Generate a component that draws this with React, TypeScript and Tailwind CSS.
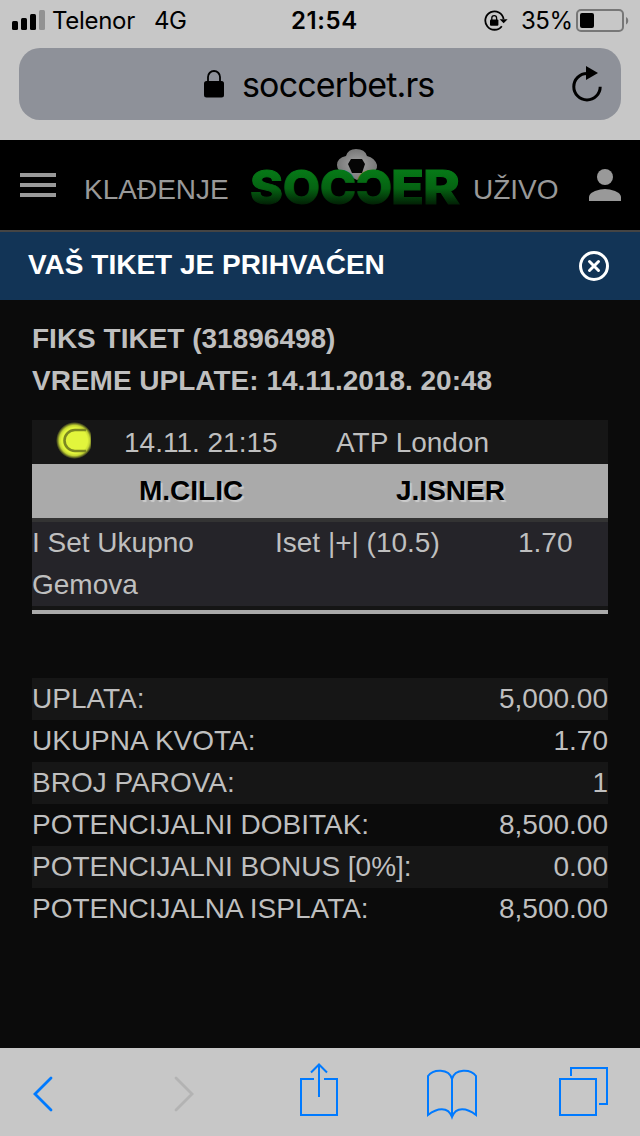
const totals = [
  { label: 'UPLATA:', value: '5,000.00' },
  { label: 'UKUPNA KVOTA:', value: '1.70' },
  { label: 'BROJ PAROVA:', value: '1' },
  { label: 'POTENCIJALNI DOBITAK:', value: '8,500.00' },
  { label: 'POTENCIJALNI BONUS [0%]:', value: '0.00' },
  { label: 'POTENCIJALNA ISPLATA:', value: '8,500.00' },
];

function StatusBar() {
  return (
    <div className="flex h-10 items-center pl-3 pt-px text-2xl leading-10 text-black">
      <div className="flex w-[279px] items-center">
        <svg className="-mt-px" width="34" height="20" viewBox="0 0 34 20">
          <rect x="0" y="11" width="6" height="9" rx="1.5" />
          <rect x="9" y="8" width="6" height="12" rx="1.5" />
          <rect x="18" y="4" width="6" height="16" rx="1.5" />
          <rect x="27" y="0" width="6" height="20" rx="1.5" fill="#929292" />
        </svg>
        <span className="ml-[6px] w-[102px] tracking-[-0.3px]">Telenor</span>
        <span className="tracking-[-0.5px]">4G</span>
      </div>
      <span className="w-[193px] font-semibold tracking-[0.6px]">21:54</span>
      <svg width="24" height="22" viewBox="0 0 24 22">
        <path d="M17.8 16.2A9.200 9.200 0 1 1 19.600 9" fill="none" stroke="#000" strokeWidth="1.8" />
        <path d="M15.600 9.200h8L19.600 13.200z" />
        <rect x="6" y="9.600" width="8.400" height="6.200" rx="1" />
        <path d="M7.800 10V8a2.400 2.400 0 0 1 4.800 0v2" fill="none" stroke="#000" strokeWidth="1.300" />
      </svg>
      <span className="ml-[13px] w-[55px] tracking-[-0.5px]">35%</span>
      <svg className="shrink-0" width="54" height="24" viewBox="0 0 54 24">
        <rect x="1" y="1" width="46" height="21" rx="4" fill="none" stroke="#777" strokeWidth="2" />
        <rect x="4" y="4" width="14" height="15" rx="2" />
        <path d="M50 8c3 1.500 3 6 0 7.500z" fill="#777" />
      </svg>
    </div>
  );
}

function AddressBar() {
  return (
    <div className="mx-[19px] mt-2 flex h-[72px] items-center rounded-[21px] bg-[#8e9199] text-black">
      <svg className="ml-[185px]" width="20" height="28" viewBox="0 0 20 28">
        <rect x="0" y="11" width="20" height="16.500" rx="2.500" />
        <path d="M4 12V7a6 6 0 0 1 12 0v5" fill="none" stroke="#000" strokeWidth="1.800" />
      </svg>
      <span className="ml-[18px] w-[328px] text-[34px] tracking-[-0.85px]">soccerbet.rs</span>
      <svg width="32" height="40" viewBox="0 0 32 40">
        <path d="M17 9.500A13.200 13.200 0 1 0 30.200 22.700" fill="none" stroke="#000" strokeWidth="3" />
        <path d="M16 2L28 9L16 16z" />
      </svg>
    </div>
  );
}

function Logo() {
  return (
    <svg
      width="214"
      height="74"
      viewBox="0 0 214 74"
      fontFamily="Inter, sans-serif"
      fontWeight="800"
      fontSize="47"
      fill="url(#grass)"
      stroke="url(#grass)"
      strokeWidth="1"
    >
      <defs>
        <linearGradient id="grass" gradientUnits="userSpaceOnUse" x1="0" y1="22" x2="0" y2="59">
          <stop offset="0" stopColor="#067a17" />
          <stop offset="0.500" stopColor="#056312" />
          <stop offset="1" stopColor="#011503" />
        </linearGradient>
        <radialGradient id="ball">
          <stop offset="0" stopColor="#a5a5a5" />
          <stop offset="1" stopColor="#777" />
        </radialGradient>
      </defs>
      <path d="M88 17q0-7 9-9q2-7 10-7q9 0 11 7q8 2 10 9q1 6-8 9l-12 6l-12-6q-8-3-8-9z" fill="url(#ball)" stroke="none" />
      <path d="M102 11h11l3 5-3 9h-10l-4-9z" fill="#050505" stroke="none" />
      <text x="1" y="56" textLength="33" lengthAdjust="spacingAndGlyphs">S</text>
      <text x="34" y="56" textLength="37" lengthAdjust="spacingAndGlyphs">O</text>
      <text x="71" y="56" textLength="36" lengthAdjust="spacingAndGlyphs">C</text>
      <text x="0" y="56" transform="translate(143 0) scale(-1 1)" textLength="36" lengthAdjust="spacingAndGlyphs">C</text>
      <text x="142" y="56" textLength="33" lengthAdjust="spacingAndGlyphs">E</text>
      <text x="174" y="56" textLength="37" lengthAdjust="spacingAndGlyphs">R</text>
    </svg>
  );
}

function SiteHeader() {
  return (
    <div className="flex h-[92px] items-center border-b-2 border-[#444] bg-black pl-5 text-[28px] text-[#999]">
      <div className="flex w-16 flex-col gap-[6px]">
        <span className="h-1 w-9 bg-[#999]" />
        <span className="h-1 w-9 bg-[#999]" />
        <span className="h-1 w-9 bg-[#999]" />
      </div>
      <span className="w-[165px] pt-[9px]">KLAĐENJE</span>
      <div className="w-[224px]">
        <Logo />
      </div>
      <span className="w-[116px] pt-[9px]">UŽIVO</span>
      <svg width="32" height="32" viewBox="0 0 32 32" fill="#999">
        <circle cx="16" cy="8" r="8" />
        <path d="M0 32v-4c0-5.300 10.700-8 16-8s16 2.700 16 8v4z" />
      </svg>
    </div>
  );
}

function TicketBanner() {
  return (
    <div className="flex h-[68px] items-center justify-between bg-[#123456] pl-7 pr-[31px] text-[28px] font-bold text-white">
      <span className="pb-[2px]">VAŠ TIKET JE PRIHVAĆEN</span>
      <svg width="30" height="30" viewBox="0 0 30 30" fill="none" stroke="#fff">
        <circle cx="15" cy="15" r="13.500" strokeWidth="3" />
        <path d="M10.500 10.500l9 9M19.500 10.500l-9 9" strokeWidth="3" strokeLinecap="round" />
      </svg>
    </div>
  );
}

function TennisBall() {
  return (
    <svg width="38" height="38" viewBox="0 0 38 38">
      <defs>
        <radialGradient id="tennis">
          <stop offset="0.700" stopColor="#e2f53c" />
          <stop offset="0.820" stopColor="#c3d433" />
          <stop offset="1" stopColor="#161616" />
        </radialGradient>
        <clipPath id="edge">
          <rect width="36" height="38" />
        </clipPath>
      </defs>
      <g clipPath="url(#edge)">
        <circle cx="19.500" cy="19.500" r="18.500" fill="url(#tennis)" />
        <path d="M31 9H20a10.500 10.500 0 0 0 0 21h11" fill="none" stroke="#7c8822" strokeWidth="2.600" />
      </g>
    </svg>
  );
}

function Match() {
  return (
    <div className="mt-[18px]">
      <div className="flex h-11 items-center bg-[#161616]">
        <div className="-mt-1 ml-[23px] w-[69px]">
          <TennisBall />
        </div>
        <span className="w-[212px] pt-0.5">14.11. 21:15</span>
        <span className="pt-0.5">ATP London</span>
      </div>
      <div className="flex h-[54px] items-center bg-[#aaa] font-bold text-black [text-shadow:2px_2px_1px_#ccc]">
        <span className="ml-[107px] w-[257px]">M.CILIC</span>
        <span>J.ISNER</span>
      </div>
      <div className="flex border-b-4 border-t-4 border-b-[#151515] border-t-[#333] bg-[#252429]">
        <span className="w-[243px] pr-8">I Set Ukupno Gemova</span>
        <span className="w-[243px]">Iset |+| (10.5)</span>
        <span>1.70</span>
      </div>
      <div className="h-1 bg-[#aaa]" />
    </div>
  );
}

function Toolbar() {
  return (
    <div className="h-22 bg-[#c7c7c7]">
      <svg width="640" height="88" viewBox="0 0 640 88" fill="none" stroke="#007aff" strokeWidth="2">
        <path d="M51 30L35 46l16 16" strokeWidth="2.800" strokeLinecap="round" />
        <path d="M176 30l16 16-16 16" stroke="#b3b3b3" strokeWidth="2.800" strokeLinecap="round" />
        <path d="M314 31h-13v36h36V31h-13M319 49V17M311 24.500l8-8 8 8" />
        <path d="M428 28v39c9-7 20-9 24 2 4-11 15-9 24-2V28c-5-7-21-8-24 3-3-11-19-10-24-3zM452 30v39" />
        <path d="M560 31h36v36h-36zM571 28v-8h36v36h-8" />
      </svg>
    </div>
  );
}

export default function App() {
  return (
    <div className="flex h-[1136px] w-[640px] flex-col overflow-hidden bg-[#0b0b0b] font-['Liberation_Sans',sans-serif]">
      <div className="h-[140px] bg-[#c7c7c7] font-[Inter,sans-serif]">
        <StatusBar />
        <AddressBar />
      </div>
      <SiteHeader />
      <TicketBanner />
      <div className="flex-1 px-8 pt-[18px] text-[28px] leading-[42px] text-[#bfbfbf]">
        <div className="font-bold">
          <p>FIKS TIKET (31896498)</p>
          <p>VREME UPLATE: 14.11.2018. 20:48</p>
        </div>
        <Match />
        <div className="mt-16">
          {totals.map(row => (
            <div className="flex justify-between odd:bg-[#161616]" key={row.label}>
              <span>{row.label}</span>
              <span>{row.value}</span>
            </div>
          ))}
        </div>
      </div>
      <Toolbar />
    </div>
  );
}
